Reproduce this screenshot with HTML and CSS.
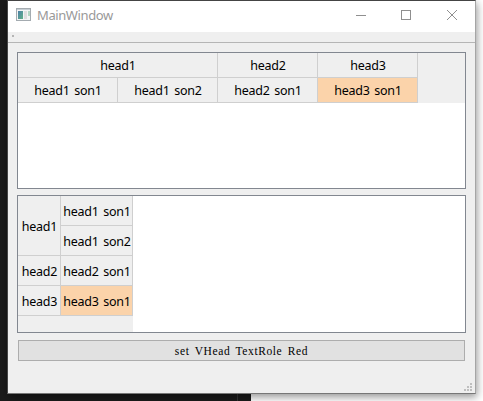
FILE: index.html
```html
<!DOCTYPE html>
<html lang="en">
<head>
<meta charset="utf-8">
<title>MainWindow</title>
<link rel="stylesheet" href="styles.css">
</head>
<body>
<main class="window">
  <header class="titlebar">
    <svg class="app-icon" width="16" height="14" viewBox="0 0 16 14">
      <defs><linearGradient id="pane" x1="0" y1="0" x2="1" y2="1"><stop offset="0" stop-color="#4c7fa8"/><stop offset="1" stop-color="#62b287"/></linearGradient></defs>
      <rect x=".5" y=".5" width="14" height="12" fill="#f3f4f4" stroke="#a4abb0"/>
      <path d="M1 1.500h13" stroke="#c6ced4"/>
      <rect x="2" y="3" width="5" height="8" fill="url(#pane)"/>
      <rect x="8" y="3" width="3" height="8" fill="#dedede"/>
      <rect x="12" y="3" width="2" height="5" fill="#b4d6c4"/>
    </svg>
    <h1 class="title">MainWindow</h1>
    <div class="controls">
      <svg width="46" height="30" viewBox="0 0 46 30"><path d="M19 14.500h10"/></svg>
      <svg width="46" height="30" viewBox="0 0 46 30"><rect x="18.500" y="9.500" width="9" height="9"/></svg>
      <svg width="46" height="30" viewBox="0 0 46 30"><path d="M18 9l10 10M28 9l-10 10"/></svg>
    </div>
  </header>
  <div class="toolbar"><span class="handle"></span></div>
  <section class="content">
    <div class="view view-top">
      <div class="hhead">
        <div class="cell span-cols">head1</div>
        <div class="cell">head2</div>
        <div class="cell">head3</div>
        <div class="cell">head1 son1</div>
        <div class="cell">head1 son2</div>
        <div class="cell">head2 son1</div>
        <div class="cell marked">head3 son1</div>
      </div>
    </div>
    <div class="view view-bottom">
      <div class="vhead">
        <div class="cell span-rows">head1</div>
        <div class="cell">head1 son1</div>
        <div class="cell">head1 son2</div>
        <div class="cell">head2</div>
        <div class="cell">head2 son1</div>
        <div class="cell">head3</div>
        <div class="cell marked">head3 son1</div>
      </div>
    </div>
    <button class="push">set VHead TextRole Red</button>
  </section>
  <svg class="grip" width="8" height="8" viewBox="0 0 8 8"><path d="M6 0h2v2H6zM3 3h2v2H3zM6 3h2v2H6zM0 6h2v2H0zM3 6h2v2H3zM6 6h2v2H6z"/></svg>
</main>
</body>
</html>
```
FILE: styles.css
```css
* { box-sizing: border-box; }
body {
  margin: 0;
  width: 483px;
  height: 401px;
  overflow: hidden;
  padding-left: 7px;
  background: linear-gradient(90deg, #1b1b1b 237px, #353535 237px, #353535 238px, #1b1b1b 238px, #1b1b1b 251px, #fff 251px);
  font-family: "Noto Sans", "Open Sans", sans-serif;
  font-size: 12.5px;
  color: #000;
}
.window {
  position: relative;
  width: 469px;
  height: 394px;
  border: 1px solid #a5a5a5;
  border-left-color: #474747;
  border-top-color: #444;
  border-bottom-color: #777;
  background: #efefef;
  box-shadow: 1px 3px 8px rgba(0, 0, 0, .42);
}
.titlebar {
  display: flex;
  height: 31px;
  padding-left: 8px;
  background: #fff;
}
.app-icon { margin-top: 7px; }
.title {
  margin: 0 0 0 5px;
  font-size: 13px;
  font-weight: 400;
  letter-spacing: -.4px;
  line-height: 29px;
  color: #999;
}
.controls { display: flex; margin-left: auto; }
.controls svg { fill: none; stroke: #8f8f8f; }
.toolbar {
  height: 11px;
  padding: 3px 0 0 4px;
  border-bottom: 1px solid #b5b5b5;
}
.handle { display: block; width: 2px; height: 2px; background: #b5b5b5; }
.content {
  display: flex;
  flex-direction: column;
  padding: 9px 9px 0;
}
.view { border: 1px solid #828790; background: #fff; }
.view-top { height: 137px; margin-bottom: 6px; }
.view-bottom { height: 138px; margin-bottom: 7px; }
.hhead {
  display: grid;
  grid-template-columns: repeat(4, 100px);
  grid-template-rows: 25px 25px;
  background: #efefef;
}
.vhead {
  display: grid;
  grid-template-columns: 43px 72px;
  grid-template-rows: repeat(4, 30px);
  width: 115px;
  height: 136px;
  background: #efefef;
}
.cell {
  display: flex;
  align-items: center;
  justify-content: center;
  padding: 2px 0 0 1px;
  border: solid #cfcfcf;
  border-width: 0 1px 1px 0;
  line-height: 18px;
  letter-spacing: -.25px;
  word-spacing: 1.7px;
  white-space: nowrap;
}
.span-cols { grid-column: span 2; }
.span-rows { grid-row: span 2; }
.marked { background: #fbd3aa; }
.push {
  height: 21px;
  margin: 0 1px;
  padding: 1px 0 0;
  border: 1px solid #adadad;
  background: #e1e1e1;
  font: 11.5px/18px "Liberation Serif", serif;
  letter-spacing: .6px;
  word-spacing: 2px;
  color: #000;
}
.grip {
  position: absolute;
  right: 3px;
  bottom: 2px;
  fill: #bfbfbf;
}
```
